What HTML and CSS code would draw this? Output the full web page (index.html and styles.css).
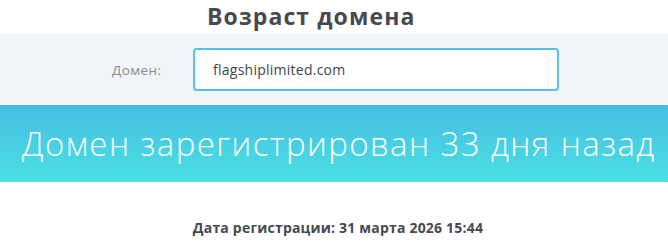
FILE: index.html
```html
<!DOCTYPE html>
<html lang="ru">
<head>
<meta charset="utf-8">
<title>Возраст домена</title>
<link rel="stylesheet" href="styles.css">
</head>
<body>
<div class="page">
  <h1 class="title">Возраст домена</h1>
  <div class="form-band">
    <label class="label" for="domain">Домен:</label>
    <div class="input" id="domain">flagshiplimited.com</div>
  </div>
  <div class="result-band">
    <p class="result">Домен зарегистрирован 33 дня назад</p>
  </div>
  <p class="date">Дата регистрации: 31 марта 2026 15:44</p>
</div>
</body>
</html>
```
FILE: styles.css
```css
* { box-sizing: border-box; }
html, body { margin: 0; padding: 0; background: #fff; }
body { font-family: "Open Sans", "Noto Sans", sans-serif; }
.page { width: 668px; overflow: hidden; }
.title {
  margin: 0;
  height: 34px;
  padding-left: 207px;
  font-size: 23px;
  font-weight: 700;
  line-height: 32px;
  color: #464a4f;
  letter-spacing: 1.1px;
}
.form-band {
  background: #f2f5f7;
  height: 71px;
  display: flex;
  align-items: center;
}
.label {
  width: 193px;
  padding-left: 112px;
  font-size: 13.5px;
  letter-spacing: 0.4px;
  color: #888b8e;
}
.input {
  width: 366px;
  height: 43px;
  border: 2px solid #53c3e9;
  border-radius: 4px;
  background: #fff;
  padding-left: 18px;
  display: flex;
  align-items: center;
  font-size: 14px;
  letter-spacing: 0.25px;
  color: #3d4550;
}
.result-band {
  height: 77px;
  background: linear-gradient(to bottom, #46bde3, #4ae1e3);
  display: flex;
  align-items: center;
}
.result {
  margin: 0;
  padding-left: 22px;
  font-size: 33px;
  font-weight: 300;
  letter-spacing: 1.4px;
  color: #fff;
  white-space: nowrap;
}
.date {
  margin: 0;
  padding-top: 36px;
  text-align: center;
  padding-left: 8px;
  font-size: 14px;
  font-weight: 700;
  letter-spacing: 0.2px;
  color: #454a50;
}
```
